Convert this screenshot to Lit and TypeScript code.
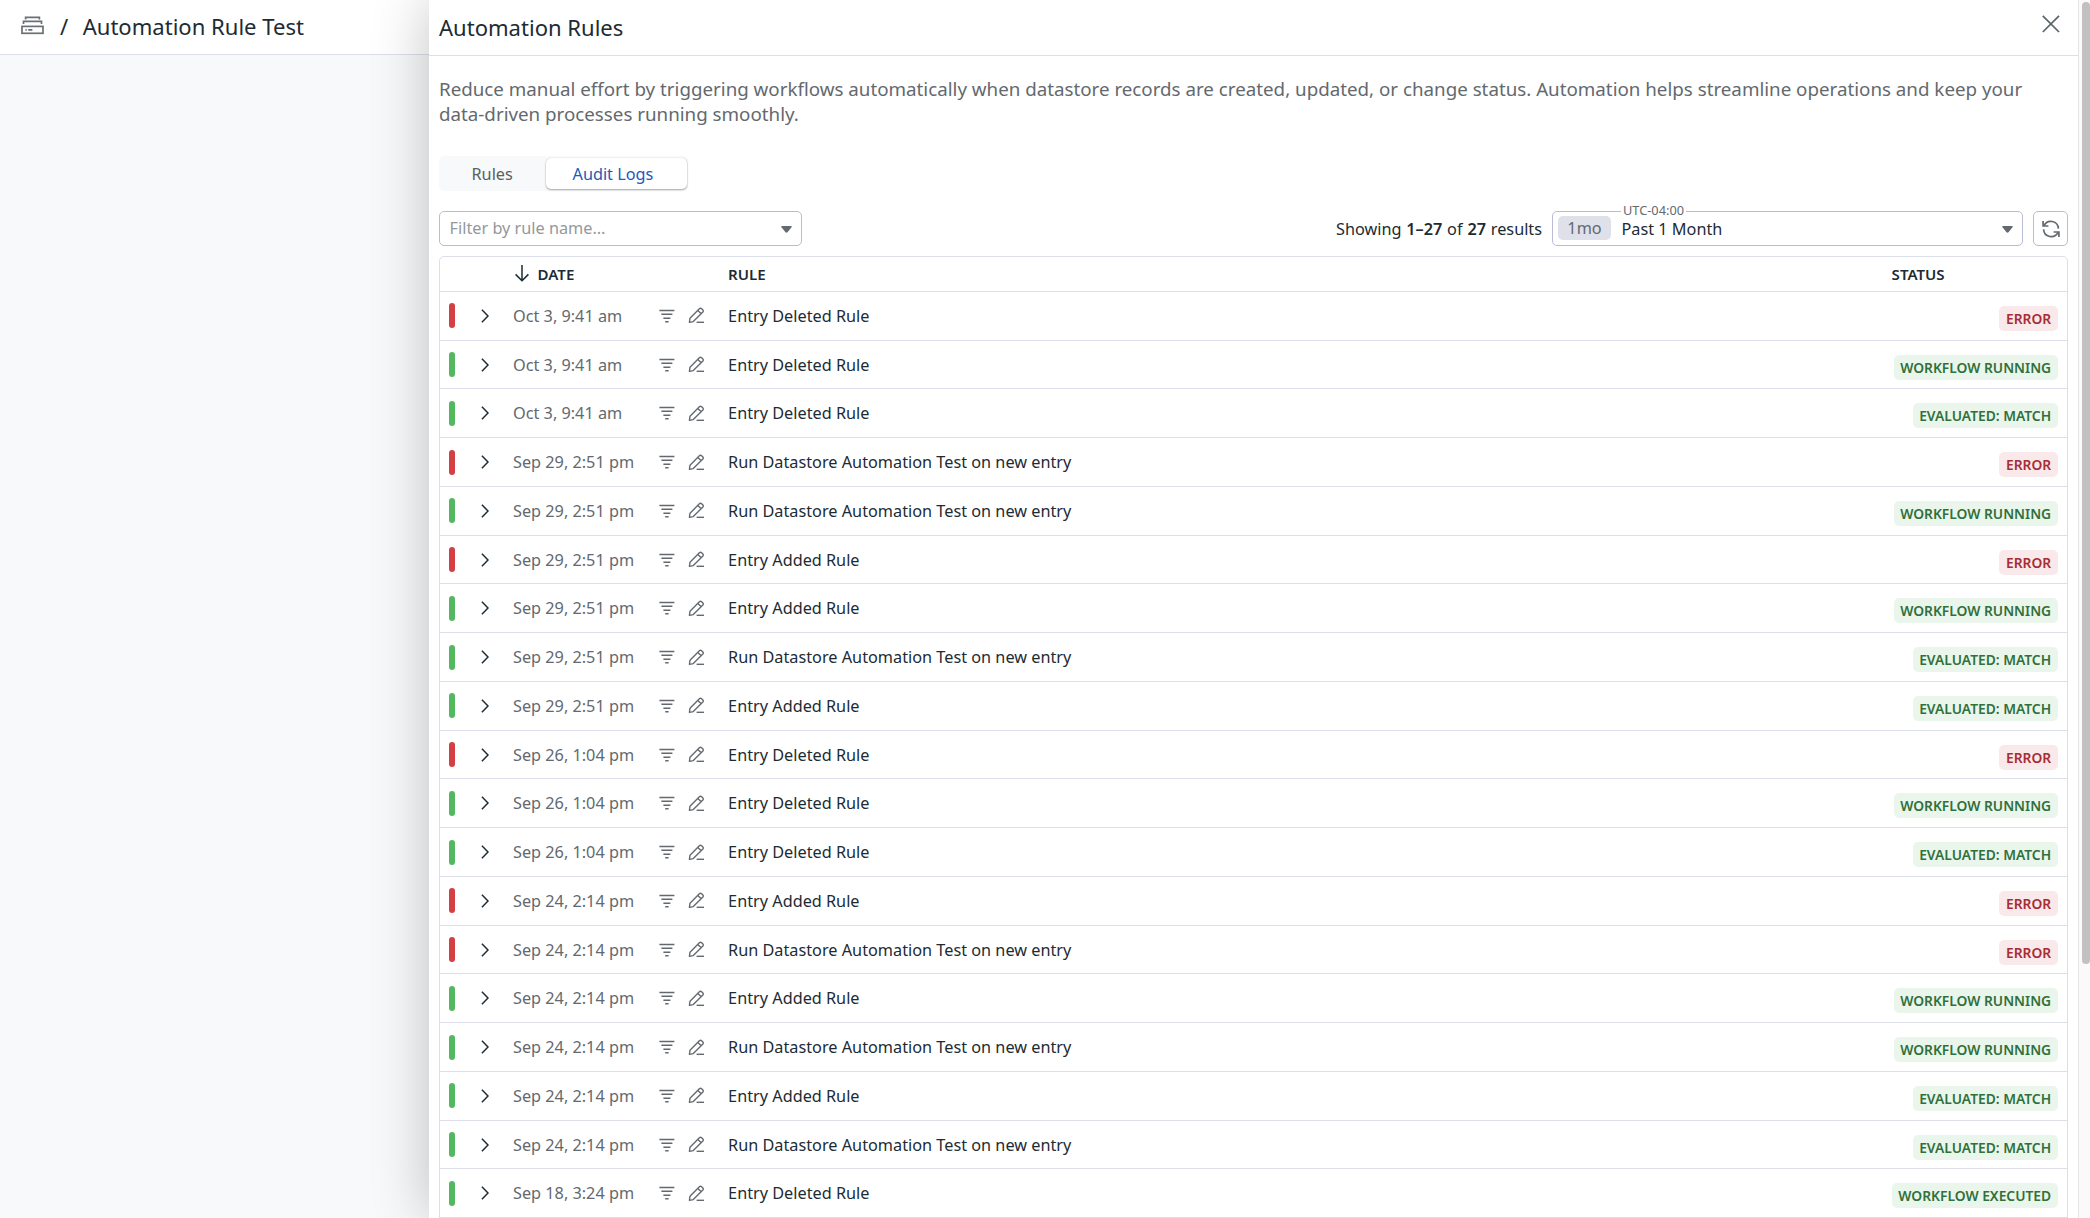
import { LitElement, html, css, svg } from 'lit';
import { customElement, property } from 'lit/decorators.js';
import { classMap } from 'lit/directives/class-map.js';

type Status = 'ERROR' | 'WORKFLOW RUNNING' | 'EVALUATED: MATCH' | 'WORKFLOW EXECUTED';
interface LogEntry { date: string; rule: string; status: Status; }

const DELETED = 'Entry Deleted Rule';
const ADDED = 'Entry Added Rule';
const RUN = 'Run Datastore Automation Test on new entry';

const entry = (date: string, rule: string, status: Status): LogEntry => ({ date, rule, status });

const LOGS: LogEntry[] = [
  entry('Oct 3, 9:41 am', DELETED, 'ERROR'),
  entry('Oct 3, 9:41 am', DELETED, 'WORKFLOW RUNNING'),
  entry('Oct 3, 9:41 am', DELETED, 'EVALUATED: MATCH'),
  entry('Sep 29, 2:51 pm', RUN, 'ERROR'),
  entry('Sep 29, 2:51 pm', RUN, 'WORKFLOW RUNNING'),
  entry('Sep 29, 2:51 pm', ADDED, 'ERROR'),
  entry('Sep 29, 2:51 pm', ADDED, 'WORKFLOW RUNNING'),
  entry('Sep 29, 2:51 pm', RUN, 'EVALUATED: MATCH'),
  entry('Sep 29, 2:51 pm', ADDED, 'EVALUATED: MATCH'),
  entry('Sep 26, 1:04 pm', DELETED, 'ERROR'),
  entry('Sep 26, 1:04 pm', DELETED, 'WORKFLOW RUNNING'),
  entry('Sep 26, 1:04 pm', DELETED, 'EVALUATED: MATCH'),
  entry('Sep 24, 2:14 pm', ADDED, 'ERROR'),
  entry('Sep 24, 2:14 pm', RUN, 'ERROR'),
  entry('Sep 24, 2:14 pm', ADDED, 'WORKFLOW RUNNING'),
  entry('Sep 24, 2:14 pm', RUN, 'WORKFLOW RUNNING'),
  entry('Sep 24, 2:14 pm', ADDED, 'EVALUATED: MATCH'),
  entry('Sep 24, 2:14 pm', RUN, 'EVALUATED: MATCH'),
  entry('Sep 18, 3:24 pm', DELETED, 'WORKFLOW EXECUTED'),
];

const icon = (w: number, h: number, body: unknown, cls = '') =>
  html`<svg class="icon ${cls}" width=${w} height=${h} viewBox="0 0 ${w} ${h}" fill="none" stroke="currentColor">${body}</svg>`;

const datastoreIcon = icon(23, 19, svg`
  <path stroke-width="1.7" d="M4.6 3.6V1.4H18.4V3.6"/>
  <path stroke-width="1.7" d="M2.5 8V5.4H20.5V8"/>
  <rect stroke-width="1.7" x="1" y="10.4" width="21" height="6.9"/>
  <path stroke-width="1.8" d="M4.4 13.9h1.4M7.2 13.9h4.2"/>`);
const closeIcon = icon(18, 18, svg`<path stroke-width="1.7" d="M.8.8 17 17M17 .8.8 17"/>`);
const sortIcon = icon(14, 17, svg`<path stroke-width="1.5" d="M7 0V15.6M.6 9.4 7 15.8 13.4 9.4"/>`);
const caretIcon = icon(11, 7, svg`<path stroke="none" fill="currentColor" d="M.9 0H10.1Q11 .3 10.5 1.3L6.5 6.3Q5.5 7.2 4.5 6.3L.5 1.3Q0 .3.9 0Z"/>`);
const refreshIcon = icon(18, 18, svg`
  <path stroke-width="1.7" d="M2 5.6A7.6 7.6 0 0 1 16.4 8.6M16 12.4A7.6 7.6 0 0 1 1.6 9.4"/>
  <path stroke-width="1.7" d="M1.1.9V6H6.4M16.9 17.1V12H11.6"/>`);
const chevronIcon = icon(8, 14, svg`<path stroke-width="1.5" d="M.9.8 7 7 .9 13.2"/>`);
const filterIcon = icon(16, 14, svg`<path stroke-width="1.4" d="M.4 1.5H15.4M2.4 5.2H13.4M4.4 9.2H11.4M6.2 12.8H9.6"/>`);
const editIcon = icon(17, 17, svg`
  <path stroke-width="1.35" stroke-linejoin="round" d="M1.4 15.4 2 11.2 11.6 1.6Q12.6.8 13.6 1.7L14.9 3Q15.7 4 14.9 5L5.3 14.6ZM9.8 3.4 13 6.6"/>
  <path stroke-width="1.4" d="M8.6 15.3H16"/>`);

const FONT = css`
  :host { font-family: "Noto Sans", "Open Sans", sans-serif; font-size: 16.25px; line-height: 22px; color: #1c2b34; }
  * { box-sizing: border-box; }
  .icon { display: block; flex: none; }
`;

@customElement('audit-row')
class AuditRow extends LitElement {
  @property({ attribute: false }) log!: LogEntry;

  static styles = [FONT, css`
    :host { display: block; height: 48.765px; border-bottom: 1px solid #dcdeea; }
    .row { display: grid; grid-template-columns: 32px 32px 145.5px 69.6px 1fr auto; align-items: center; height: 100%; padding: 0 9px 0 9px; white-space: nowrap; }
    .bar { width: 6px; height: 25px; border-radius: 3px; background: #54b861; }
    .bar.error { background: #d33f43; }
    .date { color: #63696e; }
    .actions { display: flex; align-items: center; gap: 13.5px; color: #63696e; }
    .badge { margin-top: 5px; height: 25px; padding: 0 6.5px; border-radius: 5px; background: #eaf6ec; color: #30703a; font-size: 13.8px; font-weight: 600; line-height: 25px; }
    .badge.error { background: #fae9ea; color: #a72d33; }
  `];

  render() {
    const { date, rule, status } = this.log;
    const error = status === 'ERROR';
    return html`<div class="row">
      <span class=${classMap({ bar: true, error })}></span>
      ${chevronIcon}
      <span class="date">${date}</span>
      <span class="actions">${filterIcon}${editIcon}</span>
      <span>${rule}</span>
      <span class=${classMap({ badge: true, error })}>${status}</span>
    </div>`;
  }
}

@customElement('app-root')
class AppRoot extends LitElement {
  static styles = [FONT, css`
    :host { display: flex; height: 1218px; overflow: hidden; background: #f8f9fb; }
    .page { flex: none; width: 429px; }
    .crumbs { display: flex; align-items: center; height: 55px; padding-left: 21px; background: #fff; border-bottom: 1px solid #dcdeea; font-size: 22.06px; line-height: 30px; white-space: nowrap; }
    .crumbs .icon { color: #6a7075; margin-bottom: 4px; }
    .crumbs span, .head span { margin-bottom: 2px; }
    .crumbs .slash { margin-left: 16px; margin-right: 14.5px; }
    .panel { position: relative; flex: 1; display: flex; background: #fff; box-shadow: 0 0 54px rgba(0, 0, 0, .24); }
    .main { flex: 1; min-width: 0; }
    .scroll { width: 12px; border-left: 1px solid #e6e6e6; background: #fafafa; padding: 2px 0 0 3px; }
    .thumb { width: 8px; height: 962px; border-radius: 4px; background: #c1c1c1; }
    .head { display: flex; align-items: center; justify-content: space-between; height: 56px; padding: 0 18.5px 0 10px; border-bottom: 1px solid #dcdeea; font-size: 22.06px; line-height: 30px; }
    .head .icon { color: #5c6368; margin-bottom: 7px; }
    .body { padding: 20.2px 10.4px 0 10px; }
    .intro { margin: 0 0 29.8px; font-size: 18.75px; line-height: 25px; color: #63696e; }
    .tabs { display: flex; width: 249px; height: 35px; padding: 2px 1px 2px 0; border-radius: 5px; background: #f8f9fb; line-height: 31px; white-space: nowrap; }
    .tab { width: 107px; padding-left: 32.5px; color: #585f63; line-height: 32px; }
    .tab.active { flex: 1; padding-left: 26.5px; border-radius: 5px; background: #fff; color: #2459b8; box-shadow: 0 1px 2px rgba(0, 0, 0, .32), 0 0 1px rgba(0, 0, 0, .2); }
    .tools { display: flex; align-items: center; justify-content: space-between; margin: 20px 0 10px; white-space: nowrap; }
    .group { display: flex; align-items: center; gap: 10px; }
    .count { padding-top: 2px; word-spacing: .6px; }
    .count b { font-weight: 600; }
    .box { position: relative; display: flex; align-items: center; height: 35px; border: 1px solid #b9bcd4; border-radius: 5px; background: #fff; color: #63696e; }
    .filter { width: 363px; justify-content: space-between; padding: 0 9px 0 9.6px; color: #63696e; }
    .filter .icon, .range .icon { margin-top: 2px; }
    .hint { color: #94989c; }
    .range { width: 470.6px; padding: 0 9px 0 5px; }
    .pill { width: 53px; height: 24px; border-radius: 5px; background: #dee0ea; text-align: center; line-height: 25px; color: #63696e; }
    .value { flex: 1; padding: 2px 0 0 10.5px; color: #1c2b34; }
    .zone { position: absolute; top: -10px; left: 68px; padding: 0 2px; background: #fff; font-size: 12.77px; line-height: 16px; }
    .refresh { width: 35px; justify-content: center; padding: 1px 0 0 1px; }
    .table { border: 1px solid #dcdeea; border-radius: 5px 5px 0 0; }
    .columns { display: grid; grid-template-columns: 66px 213.1px 1fr 166px; align-items: center; height: 35px; padding: 0 9px; border-bottom: 1px solid #dcdeea; font-size: 15.09px; font-weight: 600; }
    .columns .sort { display: flex; align-items: center; gap: 8.5px; }
  `];

  render() {
    return html`
      <div class="page">
        <div class="crumbs">${datastoreIcon}<span class="slash">/</span><span>Automation Rule Test</span></div>
      </div>
      <div class="panel">
        <div class="main">
          <div class="head"><span>Automation Rules</span>${closeIcon}</div>
          <div class="body">
            <p class="intro">Reduce manual effort by triggering workflows automatically when datastore records are created, updated, or change status. Automation helps streamline operations and keep your data-driven processes running smoothly.</p>
            <div class="tabs"><span class="tab">Rules</span><span class="tab active">Audit Logs</span></div>
            <div class="tools">
              <div class="box filter"><span class="hint">Filter by rule name...</span>${caretIcon}</div>
              <div class="group">
                <span class="count">Showing <b>1–27</b> of <b>27</b> results</span>
                <div class="box range">
                  <span class="zone">UTC-04:00</span>
                  <span class="pill">1mo</span><span class="value">Past 1 Month</span>${caretIcon}
                </div>
                <div class="box refresh">${refreshIcon}</div>
              </div>
            </div>
            <div class="table">
              <div class="columns"><span></span><span class="sort">${sortIcon}DATE</span><span>RULE</span><span>STATUS</span></div>
              ${LOGS.map((log) => html`<audit-row .log=${log}></audit-row>`)}
            </div>
          </div>
        </div>
        <div class="scroll"><div class="thumb"></div></div>
      </div>`;
  }
}
